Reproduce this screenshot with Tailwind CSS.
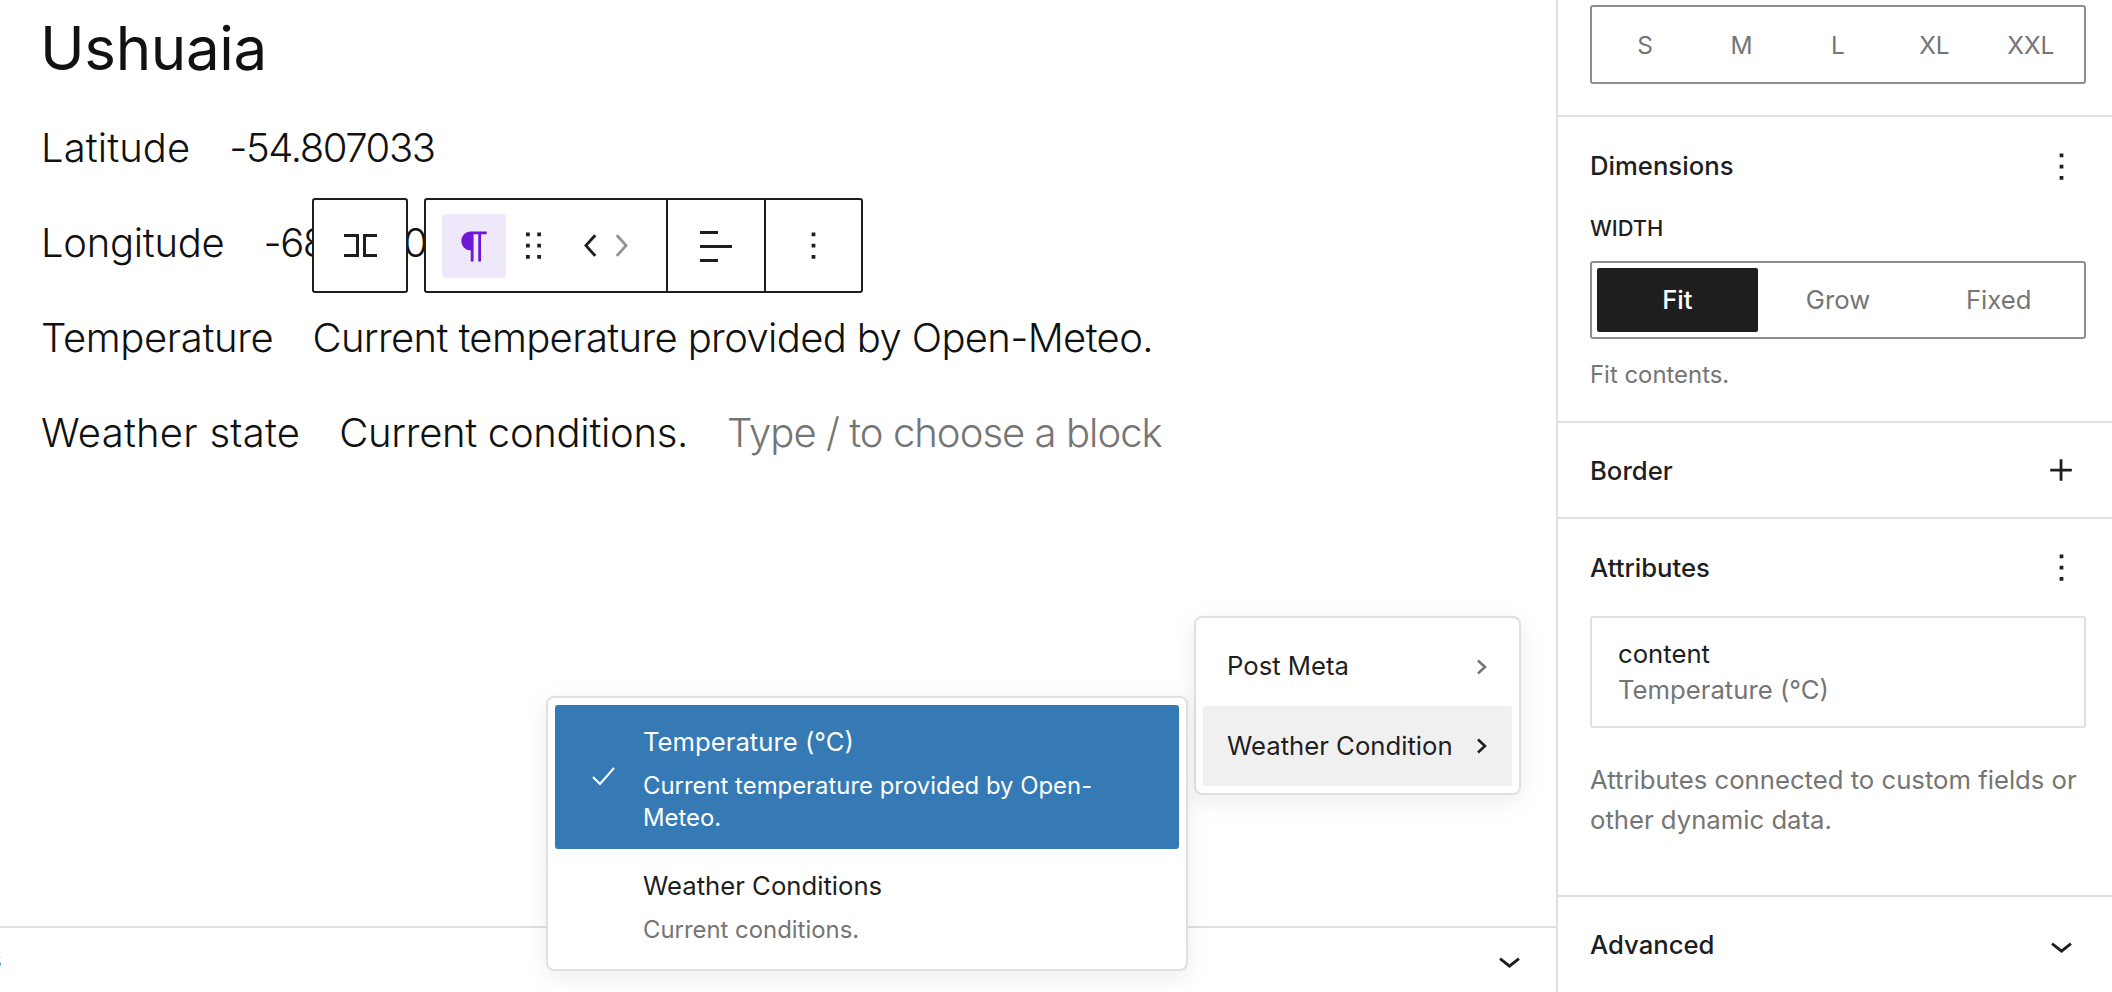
<!DOCTYPE html>
<html lang="en">
<head>
  <meta charset="UTF-8" />
  <title>Ushuaia</title>
  <script src="https://cdn.jsdelivr.net/npm/@tailwindcss/browser@4"></script>
</head>
<body class="bg-white overflow-hidden">
  <div class="relative flex w-[2112px] h-[992px] overflow-hidden font-['Inter',sans-serif] text-[#1e1e1e]">
    <!-- Editor canvas -->
    <main class="flex-1 flex flex-col min-w-0">
      <div class="flex-1 pl-[41px]">
        <h1 class="h-[96px] -ml-[1px] flex items-center text-[60px] font-normal leading-none tracking-[-0.0057em] text-[#111]">Ushuaia</h1>
        <div class="text-[40px] font-light text-[#111]">
          <p class="mt-[4px] h-[95px] flex items-center gap-[39px]"><span class="tracking-[0.002em]">Latitude</span><span class="tracking-[-0.035em]">-54.807033</span></p>
          <p class="h-[95px] flex items-center gap-[39px]"><span class="tracking-[-0.007em]">Longitude</span><span class="tracking-[-0.035em]">-68.3000</span></p>
          <p class="h-[95px] flex items-center gap-[39px]"><span class="tracking-[-0.009em]">Temperature</span><span class="tracking-[-0.016em]">Current temperature provided by Open-Meteo.</span></p>
          <p class="h-[95px] flex items-center gap-[39px]"><span class="tracking-[0.006em]">Weather state</span><span class="tracking-[-0.0075em]">Current conditions.</span><span class="tracking-[-0.024em] text-[#757575]">Type / to choose a block</span></p>
        </div>
      </div>
      <!-- Bottom bar -->
      <div class="h-[66px] border-t-2 border-[#e0e0e0] flex items-center justify-between pr-[24px] overflow-hidden">
        <span class="text-[24px] -ml-[11px]">s</span>
        <svg class="w-[45px] h-[45px]" viewBox="0 0 24 24" fill="#1e1e1e"><path d="M17.5 11.6L12 16l-5.5-4.4.9-1.2L12 14l4.6-3.6z"/></svg>
      </div>
    </main>

    <!-- Settings sidebar -->
    <aside class="w-[556px] shrink-0 border-l-2 border-[#e0e0e0] text-[25.7px]">
      <section class="h-[117px] border-b-2 border-[#e0e0e0] pl-[32px] pr-[26px] pt-[5px]">
        <div class="h-[79px] border-2 border-[#8f8f8f] rounded-[3px] grid grid-cols-5 items-center px-[5px] pt-[2px] text-[#757575] text-[24.4px]">
          <span class="text-center">S</span><span class="text-center">M</span><span class="text-center">L</span><span class="text-center">XL</span><span class="text-center">XXL</span>
        </div>
      </section>

      <section class="h-[306px] border-b-2 border-[#e0e0e0] pl-[32px] pr-[26px]">
        <div class="h-[98px] flex items-center justify-between font-medium">
          <span>Dimensions</span>
          <svg class="w-[45px] h-[45px] mr-[2px]" viewBox="0 0 24 24" fill="#1e1e1e"><path d="M13 19h-2v-2h2v2zm0-6h-2v-2h2v2zm0-6h-2V5h2v2z"/></svg>
        </div>
        <div class="h-[26px] flex items-center text-[21.8px] font-medium uppercase">Width</div>
        <div class="mt-[20px] h-[78px] border-2 border-[#8f8f8f] rounded-[3px] p-[5px] grid grid-cols-3 text-[#757575]">
          <span class="bg-[#1e1e1e] text-white rounded-[2px] flex items-center justify-center font-medium">Fit</span>
          <span class="flex items-center justify-center">Grow</span>
          <span class="flex items-center justify-center">Fixed</span>
        </div>
        <p class="mt-[20px] text-[23.9px] leading-[32px] text-[#757575]">Fit contents.</p>
      </section>

      <section class="h-[96px] border-b-2 border-[#e0e0e0] pl-[32px] pr-[26px] flex items-center justify-between font-medium">
        <span class="mt-[3px]">Border</span>
        <svg class="w-[45px] h-[45px] mr-[2px]" viewBox="0 0 24 24" fill="#1e1e1e"><path d="M11 12.5V17.5H12.5V12.5H17.5V11H12.5V6H11V11H6V12.5H11Z"/></svg>
      </section>

      <section class="h-[378px] border-b-2 border-[#e0e0e0] pl-[32px] pr-[26px]">
        <div class="h-[97px] flex items-center justify-between font-medium">
          <span class="mt-[1px]">Attributes</span>
          <svg class="w-[45px] h-[45px] mr-[2px]" viewBox="0 0 24 24" fill="#1e1e1e"><path d="M13 19h-2v-2h2v2zm0-6h-2v-2h2v2zm0-6h-2V5h2v2z"/></svg>
        </div>
        <div class="h-[112px] border-2 border-[#e0e0e0] rounded-[3px] pl-[26px] flex flex-col justify-center leading-[36px]">
          <span>content</span>
          <span class="text-[#757575]">Temperature (°C)</span>
        </div>
        <p class="mt-[32px] leading-[40px] text-[#757575]">Attributes connected to custom fields or other dynamic data.</p>
      </section>

      <section class="h-[96px] pl-[32px] pr-[26px] flex items-center justify-between font-medium">
        <span>Advanced</span>
        <svg class="w-[45px] h-[45px] mr-[2px]" viewBox="0 0 24 24" fill="#1e1e1e"><path d="M17.5 11.6L12 16l-5.5-4.4.9-1.2L12 14l4.6-3.6z"/></svg>
      </section>
    </aside>

    <!-- Block toolbar -->
    <div class="absolute left-[312px] top-[198px] flex gap-[16px]">
      <div class="w-[96px] h-[95px] bg-white border-2 border-[#1e1e1e] rounded-[3px] flex items-center justify-center">
        <svg class="w-[33px] h-[23px]" viewBox="0 0 33 23" fill="none" stroke="#1e1e1e" stroke-width="3"><path d="M0 1.5h13.5v20H0M33 1.5H20.5v20H33"/></svg>
      </div>
      <div class="h-[95px] bg-white border-2 border-[#1e1e1e] rounded-[3px] flex">
        <div class="w-[240px] flex items-center pl-[16px]">
          <div class="w-[64px] h-[64px] mt-[1px] bg-[#efe7fa] rounded-[3px] flex items-center justify-center">
            <svg class="w-[45px] h-[45px]" viewBox="0 0 24 24" fill="#6e17d4"><path d="m9.99609 14v-.2251l.00391.0001v6.225h1.5v-14.5h2.5v14.5h1.5v-14.5h3v-1.5h-8.50391c-2.76142 0-5 2.23858-5 5 0 2.7614 2.23858 5 5 5z"/></svg>
          </div>
          <svg class="w-[45px] h-[45px] ml-[5px]" viewBox="0 0 24 24" fill="#1e1e1e"><path d="M8 7h2V5H8v2zm0 6h2v-2H8v2zm0 6h2v-2H8v2zm6-14v2h2V5h-2zm0 8h2v-2h-2v2zm0 6h2v-2h-2v2z"/></svg>
          <svg class="w-[45px] h-[45px] ml-[13px]" viewBox="0 0 24 24" fill="#1e1e1e"><path d="M14.6 7l-1.2-1L8 12l5.4 6 1.2-1-4.6-5z"/></svg>
          <svg class="w-[45px] h-[45px] -ml-[16px]" viewBox="0 0 24 24" fill="#949494"><path d="M10.6 6L9.4 7l4.6 5-4.6 5 1.2 1 5.4-6z"/></svg>
        </div>
        <div class="w-[98px] border-l-2 border-[#1e1e1e] flex items-center justify-center">
          <svg class="w-[34px] h-[34px]" viewBox="0 0 34 34" fill="#1e1e1e"><rect x="1" y="2" width="18" height="3"/><rect x="1" y="16" width="32" height="3"/><rect x="1" y="30" width="18" height="3"/></svg>
        </div>
        <div class="w-[97px] border-l-2 border-[#1e1e1e] flex items-center justify-center">
          <svg class="w-[45px] h-[45px]" viewBox="0 0 24 24" fill="#1e1e1e"><path d="M13 19h-2v-2h2v2zm0-6h-2v-2h2v2zm0-6h-2V5h2v2z"/></svg>
        </div>
      </div>
    </div>

    <!-- Attribute source menu -->
    <div class="absolute left-[1194px] top-[616px] w-[327px] h-[179px] bg-white border-2 border-[#e0e0e0] rounded-[8px] shadow-[0_6px_24px_rgba(0,0,0,0.08)] p-[7px] pt-[9px] text-[25.7px]">
      <div class="h-[79px] pl-[24px] pr-[24px] flex items-center justify-between"><span>Post Meta</span>
        <svg class="w-[12px] h-[16px]" viewBox="0 0 12 16" fill="none" stroke="#757575" stroke-width="2.5"><path d="M2 1.5 9 8l-7 6.5"/></svg>
      </div>
      <div class="h-[80px] pl-[24px] pr-[24px] bg-[#f0f0f0] rounded-[3px] flex items-center justify-between"><span>Weather Condition</span>
        <svg class="w-[12px] h-[16px]" viewBox="0 0 12 16" fill="none" stroke="#1e1e1e" stroke-width="2.5"><path d="M2 1.5 9 8l-7 6.5"/></svg>
      </div>
    </div>

    <!-- Attribute value menu -->
    <div class="absolute left-[546px] top-[696px] w-[642px] h-[275px] bg-white border-2 border-[#e0e0e0] rounded-[8px] shadow-[0_6px_24px_rgba(0,0,0,0.08)] p-[7px]">
      <div class="relative h-[144px] bg-[#3579b5] rounded-[3px] text-white pl-[88px] pr-[50px] pt-[21px]">
        <svg class="absolute left-[37px] top-[62px] w-[23px] h-[19px]" viewBox="0 0 23 19" fill="none" stroke="white" stroke-width="2"><path d="M1 10l7 7L22 1"/></svg>
        <div class="text-[25.7px] leading-[32px]">Temperature (°C)</div>
        <div class="mt-[12px] text-[23.9px] leading-[32px]">Current temperature provided by Open-Meteo.</div>
      </div>
      <div class="pl-[88px] pt-[21px]">
        <div class="text-[25.7px] leading-[32px]">Weather Conditions</div>
        <div class="mt-[12px] text-[23.9px] leading-[32px] text-[#757575]">Current conditions.</div>
      </div>
    </div>
  </div>
</body>
</html>
